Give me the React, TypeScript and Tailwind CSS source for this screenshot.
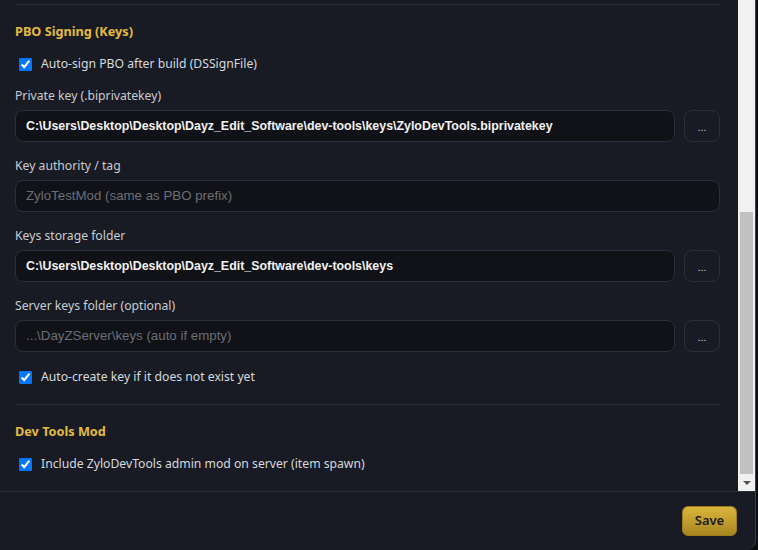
import { useState } from 'react';

const labelFont = { fontFamily: '"Segoe UI", "Noto Sans", sans-serif' };

interface PathFieldProps {
  label: string;
  value?: string;
  placeholder?: string;
  browse?: boolean;
}

const PathField = ({ label, value, placeholder, browse = true }: PathFieldProps) => (
  <>
    <div className="mt-[15px] h-[18px] flex items-center text-[12.2px] text-[#c9ccd3]">
      {label}
    </div>
    <div className="mt-[5px] flex gap-[9px]">
      <input
        type="text"
        defaultValue={value}
        placeholder={placeholder}
        className="flex-1 h-[32px] rounded-[8px] border border-[#2a2f3d] bg-[#111217] px-[10px] text-[12.4px] font-bold text-[#f2f2f2] placeholder:text-[13.3px] placeholder:font-normal placeholder:text-[#6b6e76] outline-none font-['Liberation_Sans',Arial,sans-serif]"
      />
      {browse && (
        <button
          type="button"
          className="w-[36px] h-[32px] pt-[3px] rounded-[8px] border border-[#2a2f3d] bg-[#181b23] text-[11px] text-[#d0d3da] font-['Liberation_Sans',Arial,sans-serif]"
        >
          ...
        </button>
      )}
    </div>
  </>
);

interface CheckRowProps {
  label: string;
  className?: string;
}

const CheckRow = ({ label, className = '' }: CheckRowProps) => {
  const [checked, setChecked] = useState(true);
  return (
    <label className={`h-[18px] flex items-center pl-[4px] gap-[9px] text-[12.2px] text-[#d6d9df] ${className}`}>
      <input
        type="checkbox"
        checked={checked}
        onChange={(e) => setChecked(e.target.checked)}
        className="w-[13px] h-[13px] m-0 accent-[#0075ff]"
      />
      {label}
    </label>
  );
};

const SectionTitle = ({ children, className = '' }: { children: string; className?: string }) => (
  <h3 className={`h-[18px] flex items-center text-[12.7px] font-bold text-[#e3bb3f] ${className}`}>
    {children}
  </h3>
);

export default function App() {
  return (
    <div className="w-[758px] h-[550px] bg-[#0c0d11] flex" style={labelFont}>
      <div className="w-[756px] h-full bg-[#181b23] border-r border-[#3a3e4a] rounded-br-[10px] flex flex-col overflow-hidden">
        <div className="flex flex-1 min-h-0">
          {/* settings body */}
          <div className="flex-1 flex flex-col pl-[15px] pr-[18px]">
            <div className="mt-[4px] h-px bg-[#2c303d]" />
            <SectionTitle className="mt-[18px]">PBO Signing (Keys)</SectionTitle>
            <CheckRow label="Auto-sign PBO after build (DSSignFile)" className="mt-[14px]" />
            <div className="-mt-[1px]" />
            <PathField
              label="Private key (.biprivatekey)"
              value="C:\Users\Desktop\Desktop\Dayz_Edit_Software\dev-tools\keys\ZyloDevTools.biprivatekey"
            />
            <PathField
              label="Key authority / tag"
              placeholder="ZyloTestMod (same as PBO prefix)"
              browse={false}
            />
            <PathField
              label="Keys storage folder"
              value="C:\Users\Desktop\Desktop\Dayz_Edit_Software\dev-tools\keys"
            />
            <PathField
              label="Server keys folder (optional)"
              placeholder="...\DayZServer\keys (auto if empty)"
            />
            <CheckRow label="Auto-create key if it does not exist yet" className="mt-[16px]" />
            <div className="mt-[18px] h-px bg-[#2c303d]" />
            <SectionTitle className="mt-[18px]">Dev Tools Mod</SectionTitle>
            <CheckRow
              label="Include ZyloDevTools admin mod on server (item spawn)"
              className="mt-[14px]"
            />
          </div>

          {/* scrollbar */}
          <div className="w-[17px] bg-[#f1f1f1] flex flex-col">
            <div className="mt-auto mx-[2px] h-[262px] bg-[#c1c1c1]" />
            <div className="h-[17px] flex items-center justify-center">
              <svg width="8" height="4" viewBox="0 0 8 4">
                <path d="M0 0h8L4 4z" fill="#505050" />
              </svg>
            </div>
          </div>
        </div>

        <div className="h-[59px] border-t border-[#2c303d] flex items-center justify-end pr-[18px]">
          <button
            type="button"
            className="w-[55px] h-[30px] rounded-[6px] border border-[#9c7b1c] bg-gradient-to-b from-[#dab53d] to-[#a8861f] text-[13px] font-semibold text-[#1b1a16]"
          >
            Save
          </button>
        </div>
      </div>
    </div>
  );
}
